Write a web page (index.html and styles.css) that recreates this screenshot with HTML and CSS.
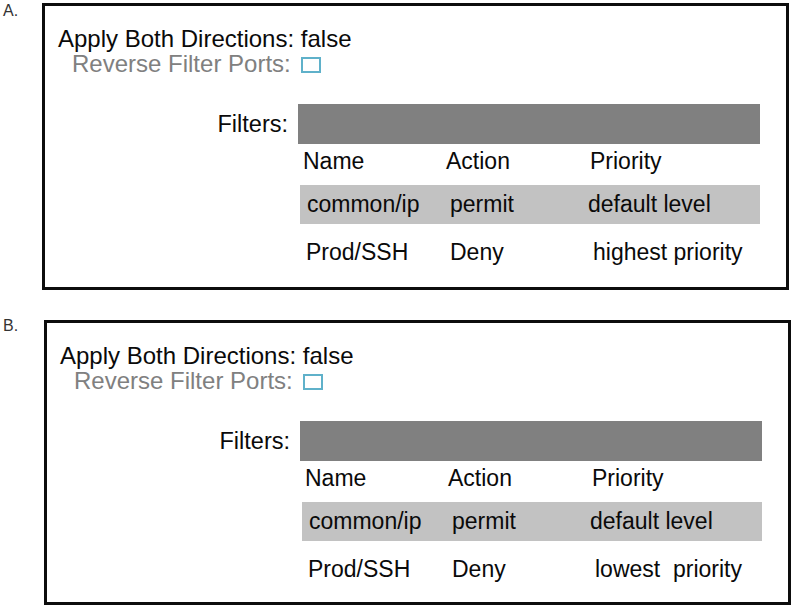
FILE: index.html
```html
<!DOCTYPE html>
<html>
<head>
<meta charset="utf-8">
<link rel="stylesheet" href="styles.css">
</head>
<body>
<div class="option option-a">
  <div class="letter">A.</div>
  <div class="panel">
    <div class="apply">Apply Both Directions: false</div>
    <div class="reverse">Reverse Filter Ports:<span class="check"></span></div>
    <div class="filters">
      <div class="filters-label">Filters:</div>
      <div class="table">
        <div class="bar"></div>
        <div class="row head"><span>Name</span><span>Action</span><span>Priority</span></div>
        <div class="row shaded"><span>common/ip</span><span>permit</span><span>default level</span></div>
        <div class="row last"><span>Prod/SSH</span><span>Deny</span><span>highest priority</span></div>
      </div>
    </div>
  </div>
</div>
<div class="option option-b">
  <div class="letter">B.</div>
  <div class="panel">
    <div class="apply">Apply Both Directions: false</div>
    <div class="reverse">Reverse Filter Ports:<span class="check"></span></div>
    <div class="filters">
      <div class="filters-label">Filters:</div>
      <div class="table">
        <div class="bar"></div>
        <div class="row head"><span>Name</span><span>Action</span><span>Priority</span></div>
        <div class="row shaded"><span>common/ip</span><span>permit</span><span>default level</span></div>
        <div class="row last"><span>Prod/SSH</span><span>Deny</span><span class="pre">lowest  priority</span></div>
      </div>
    </div>
  </div>
</div>
</body>
</html>
```

FILE: styles.css
```css
html, body {
  margin: 0;
  padding: 0;
  background: #ffffff;
}
body {
  font-family: "Liberation Sans", Arial, sans-serif;
  color: #0a0a0a;
  width: 794px;
  height: 608px;
  overflow: hidden;
}
.option {
  display: flex;
  align-items: flex-start;
}
.option-a {
  margin-top: 3px;
}
.option-b {
  margin-top: 30px;
}
.letter {
  font-size: 16px;
  line-height: 16px;
  color: #333333;
  padding-left: 3px;
  box-sizing: border-box;
}
.option-a .letter {
  width: 42px;
}
.option-b .letter {
  width: 44px;
  margin-top: -2px;
}
.panel {
  box-sizing: border-box;
  width: 747px;
  height: 287px;
  border: 3px solid #0d0d0d;
  padding: 20px 0 0 13px;
}
.option-b .panel {
  height: 285px;
}
.apply {
  font-size: 24px;
  line-height: 25px;
  color: #0a0a0a;
}
.reverse {
  font-size: 24px;
  line-height: 25px;
  color: #808080;
  margin-left: 14px;
  display: flex;
  align-items: center;
}
.check {
  display: inline-block;
  box-sizing: border-box;
  width: 20px;
  height: 16px;
  border: 2px solid #5fb1ca;
  margin-left: 10px;
  margin-top: 3px;
}
.filters {
  display: grid;
  grid-template-columns: 232px 462px;
  column-gap: 8px;
  margin-top: 28px;
}
.filters-label {
  font-size: 23.5px;
  line-height: 40px;
  height: 40px;
  text-align: right;
  padding-right: 2px;
}
.bar {
  height: 40px;
  background: #808080;
}
.row {
  display: grid;
  font-size: 23px;
  line-height: 23px;
  box-sizing: border-box;
}
.row.head {
  height: 41px;
  padding: 6px 0 0 5px;
  grid-template-columns: 143px 144px auto;
}
.row.shaded {
  height: 39px;
  margin-left: 2px;
  background: #c2c2c2;
  padding: 8px 0 0 7px;
  grid-template-columns: 143px 138px auto;
}
.row.last {
  padding: 17px 0 0 8px;
  grid-template-columns: 144px 143px auto;
}
.pre {
  white-space: pre;
}
```
